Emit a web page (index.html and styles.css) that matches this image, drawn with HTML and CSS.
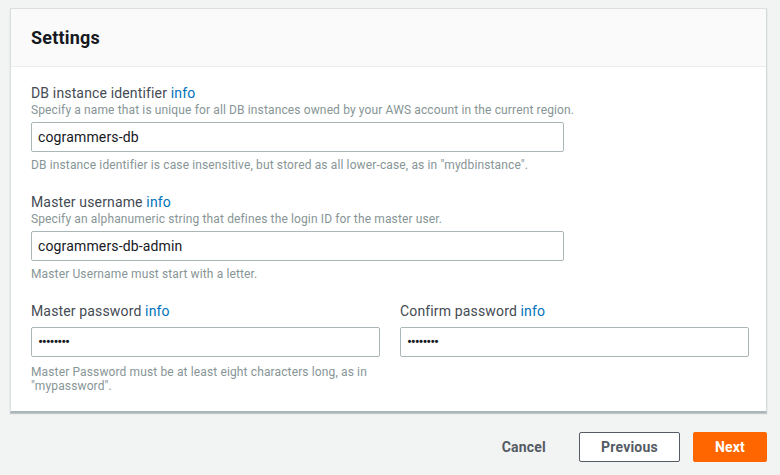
FILE: index.html
```html
<!DOCTYPE html>
<html>
<head>
<meta charset="utf-8">
<link rel="stylesheet" href="styles.css">
</head>
<body>
<div class="page">
  <section class="card">
    <header class="card-header"><h2>Settings</h2></header>
    <div class="card-body">
      <div class="field wide">
        <div class="label">DB instance identifier <a class="info">info</a></div>
        <div class="desc">Specify a name that is unique for all DB instances owned by your AWS account in the current region.</div>
        <div class="input">cogrammers-db</div>
        <div class="hint">DB instance identifier is case insensitive, but stored as all lower-case, as in "mydbinstance".</div>
      </div>
      <div class="field wide">
        <div class="label">Master username <a class="info">info</a></div>
        <div class="desc">Specify an alphanumeric string that defines the login ID for the master user.</div>
        <div class="input">cogrammers-db-admin</div>
        <div class="hint">Master Username must start with a letter.</div>
      </div>
      <div class="row">
        <div class="field">
          <div class="label">Master password <a class="info">info</a></div>
          <div class="input pw">&#8226;&#8226;&#8226;&#8226;&#8226;&#8226;&#8226;&#8226;</div>
          <div class="hint">Master Password must be at least eight characters long, as in "mypassword".</div>
        </div>
        <div class="field">
          <div class="label">Confirm password <a class="info">info</a></div>
          <div class="input pw">&#8226;&#8226;&#8226;&#8226;&#8226;&#8226;&#8226;&#8226;</div>
        </div>
      </div>
    </div>
  </section>
  <div class="actions">
    <button class="btn link">Cancel</button>
    <button class="btn secondary">Previous</button>
    <button class="btn primary">Next</button>
  </div>
</div>
</body>
</html>
```

FILE: styles.css
```css
* { box-sizing: border-box; }
html, body { margin: 0; padding: 0; }
body {
  background: #f2f3f3;
  font-family: Roboto, "Liberation Sans", sans-serif;
  color: #545b64;
  width: 780px;
  height: 475px;
  overflow: hidden;
}
.page { padding: 8px 13px 0 10px; }
.card {
  background: #fff;
  border: 1px solid #dcdfe0;
  border-bottom: 2px solid #aab7b8;
  border-right: 1px solid #d5dbdb;
  box-shadow: 0 1px 1px rgba(0,28,36,0.2);
}
.card-header {
  background: #fafafa;
  border-bottom: 1px solid #eaeded;
  height: 58px;
  display: flex;
  align-items: center;
  padding: 0 20px;
}
.card-header h2 {
  margin: 0;
  font-size: 18px;
  font-weight: 700;
  letter-spacing: 0.2px;
  color: #16191f;
}
.card-body { padding: 17px 20px 18px 20px; }
.field { display: flex; flex-direction: column; }
.field.wide { width: 533px; margin-bottom: 21px; }
.label { font-size: 14px; line-height: 18px; color: #444b53; letter-spacing: 0.15px; }
.info { color: #0073bb; }
.desc { font-size: 12px; line-height: 16px; color: #879596; margin-bottom: 4px; letter-spacing: 0.13px; white-space: nowrap; }
.input {
  height: 30px;
  border: 1px solid #aab7b8;
  border-radius: 2px;
  padding: 0 6px;
  font-size: 14px;
  line-height: 28px;
  color: #16191f;
  letter-spacing: 0.15px;
}
.row { display: grid; grid-template-columns: 349px 349px; column-gap: 20px; margin-top: 1px; }
.row .label { margin-bottom: 7px; }
.input.pw { font-size: 15px; letter-spacing: -1.2px; color: #16191f; }
.hint { font-size: 12px; line-height: 14px; color: #879596; margin-top: 6px; letter-spacing: 0.13px; }
.row .hint { margin-top: 8px; }
.actions {
  display: flex;
  justify-content: flex-end;
  align-items: center;
  gap: 13px;
  padding: 19px 0 0 0;
}
.btn {
  font-family: inherit;
  font-size: 14px;
  font-weight: 700;
  height: 30px;
  border-radius: 2px;
  letter-spacing: 0.2px;
  cursor: pointer;
}
.btn.link { background: none; border: none; color: #545b64; padding: 0 20px; }
.btn.secondary { background: #fff; border: 1px solid #545b64; color: #545b64; width: 101px; }
.btn.primary { background: #ff6600; border: 1px solid #ff6600; color: #fff; width: 74px; }
```
